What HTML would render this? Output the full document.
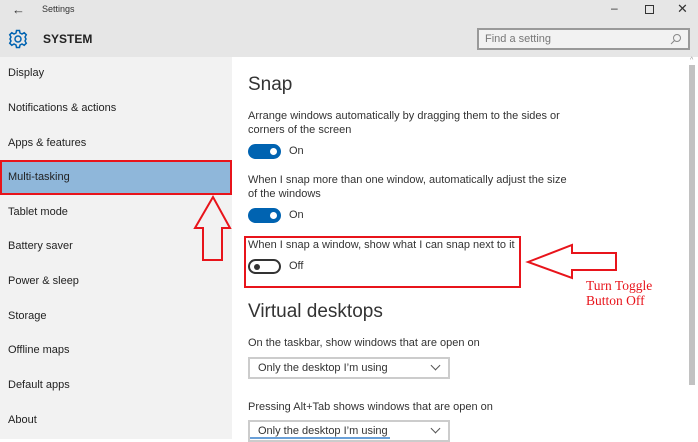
<!DOCTYPE html>
<html><head><meta charset="utf-8"><style>
*{margin:0;padding:0;box-sizing:border-box}
body{width:698px;height:439px;overflow:hidden;background:#fff;font-family:"Liberation Sans",sans-serif;position:relative;color:#222}
.a{position:absolute;white-space:nowrap}
.hdr{left:0;top:0;width:698px;height:57px;background:#e6e6e6}
.side{left:0;top:57px;width:232px;height:382px;background:#f2f2f2}
.si{left:8px;font-size:11px;color:#222}
.t{font-size:11px;color:#333;left:248px}
.h{font-size:19px;color:#333;left:248px}
.tog{width:33px;height:15px;border-radius:8px;left:248px}
.on{background:#0063b1}
.on::after{content:"";position:absolute;right:4px;top:4px;width:7px;height:7px;border-radius:50%;background:#fff}
.off{border:2px solid #333;background:#fff}
.off::after{content:"";position:absolute;left:4px;top:2.5px;width:6px;height:6px;border-radius:50%;background:#333}
.dd{left:248px;width:202px;height:22px;border:2px solid #ccc;font-size:11px;color:#333;padding:3px 8px}
.dd::after{content:"";position:absolute;right:9px;top:3px;width:6px;height:6px;border-right:1px solid #555;border-bottom:1px solid #555;transform:rotate(45deg)}
.tg{font-size:11px;color:#333}
</style></head><body>
<div class="a hdr"></div>
<div class="a side"></div>
<div class="a" style="left:12px;top:2px;font-size:13px;color:#333">←</div>
<div class="a" style="left:42px;top:4px;font-size:9px;color:#333">Settings</div>
<div class="a" style="left:611px;top:1px;font-size:12px;color:#333">–</div>
<div class="a" style="left:645px;top:5px;width:9px;height:9px;border:1.5px solid #333"></div>
<div class="a" style="left:677px;top:1px;font-size:13px;color:#333">✕</div>
<svg class="a" style="left:8px;top:29px" width="20" height="20" viewBox="0 0 20 20"><g fill="none" stroke="#0063b1" stroke-width="1.5"><circle cx="10" cy="10" r="3"/><path d="M8.5 1.5h3l.5 2.5 2 1 2.2-1.3 2.1 2.1L17 8l1 2-1 2 1.3 2.2-2.1 2.1L14 15l-2 1-.5 2.5h-3L8 16l-2-1-2.2 1.3-2.1-2.1L3 12l-1-2 1-2-1.3-2.2 2.1-2.1L6 5l2-1z"/></g></svg>
<div class="a" style="left:43px;top:32px;font-size:12px;font-weight:bold;color:#222">SYSTEM</div>
<div class="a" style="left:477px;top:28px;width:213px;height:22px;border:2px solid #999;background:#f2f2f2;font-size:11px;color:#777;padding:3px 6px">Find a setting</div>
<svg class="a" style="left:670px;top:33px" width="12" height="12"><circle cx="7" cy="5" r="3.5" fill="none" stroke="#888"/><path d="M4.5 7.5L1 11" stroke="#888"/></svg>
<div class="a si" style="top:67px">Display</div>
<div class="a si" style="top:102px">Notifications &amp; actions</div>
<div class="a si" style="top:137px">Apps &amp; features</div>
<div class="a" style="left:0;top:160px;width:232px;height:35px;background:#8fb7da;border:2px solid #e8141b"></div>
<div class="a si" style="top:171px">Multi-tasking</div>
<div class="a si" style="top:206px">Tablet mode</div>
<div class="a si" style="top:240px">Battery saver</div>
<div class="a si" style="top:275px">Power &amp; sleep</div>
<div class="a si" style="top:310px">Storage</div>
<div class="a si" style="top:344px">Offline maps</div>
<div class="a si" style="top:379px">Default apps</div>
<div class="a si" style="top:414px">About</div>
<div class="a" style="left:689px;top:65px;width:6px;height:320px;background:#c2c2c2"></div>
<div class="a" style="left:690px;top:57px;font-size:7px;color:#999">^</div>
<div class="a h" style="top:74px">Snap</div>
<div class="a t" style="top:110px">Arrange windows automatically by dragging them to the sides or</div>
<div class="a t" style="top:124px">corners of the screen</div>
<div class="a tog on" style="top:144px"></div><div class="a tg" style="left:289px;top:145px">On</div>
<div class="a t" style="top:174px">When I snap more than one window, automatically adjust the size</div>
<div class="a t" style="top:188px">of the windows</div>
<div class="a tog on" style="top:208px"></div><div class="a tg" style="left:289px;top:209px">On</div>
<div class="a" style="left:244px;top:236px;width:277px;height:52px;border:2px solid #e8141b"></div>
<div class="a t" style="top:239px">When I snap a window, show what I can snap next to it</div>
<div class="a tog off" style="top:259px"></div><div class="a tg" style="left:289px;top:260px">Off</div>
<div class="a h" style="top:301px">Virtual desktops</div>
<div class="a t" style="top:337px">On the taskbar, show windows that are open on</div>
<div class="a dd" style="top:357px">Only the desktop I’m using</div>
<div class="a t" style="top:401px">Pressing Alt+Tab shows windows that are open on</div>
<div class="a dd" style="top:420px">Only the desktop I’m using</div>
<div class="a" style="left:250px;top:437px;width:140px;height:2px;background:#6aa0d8"></div>
<svg class="a" style="left:0;top:0" width="698" height="439"><g fill="none" stroke="#e8141b" stroke-width="2"><path d="M213 197L195 228H203V260H222V228H230Z"/><path d="M528 262L572 245V253H616V270H572V278Z"/></g></svg>
<div class="a" style="left:586px;top:278px;font-family:'Liberation Serif',serif;font-size:13.5px;color:#e8141b;line-height:15px">Turn Toggle<br>Button Off</div>
</body></html>
